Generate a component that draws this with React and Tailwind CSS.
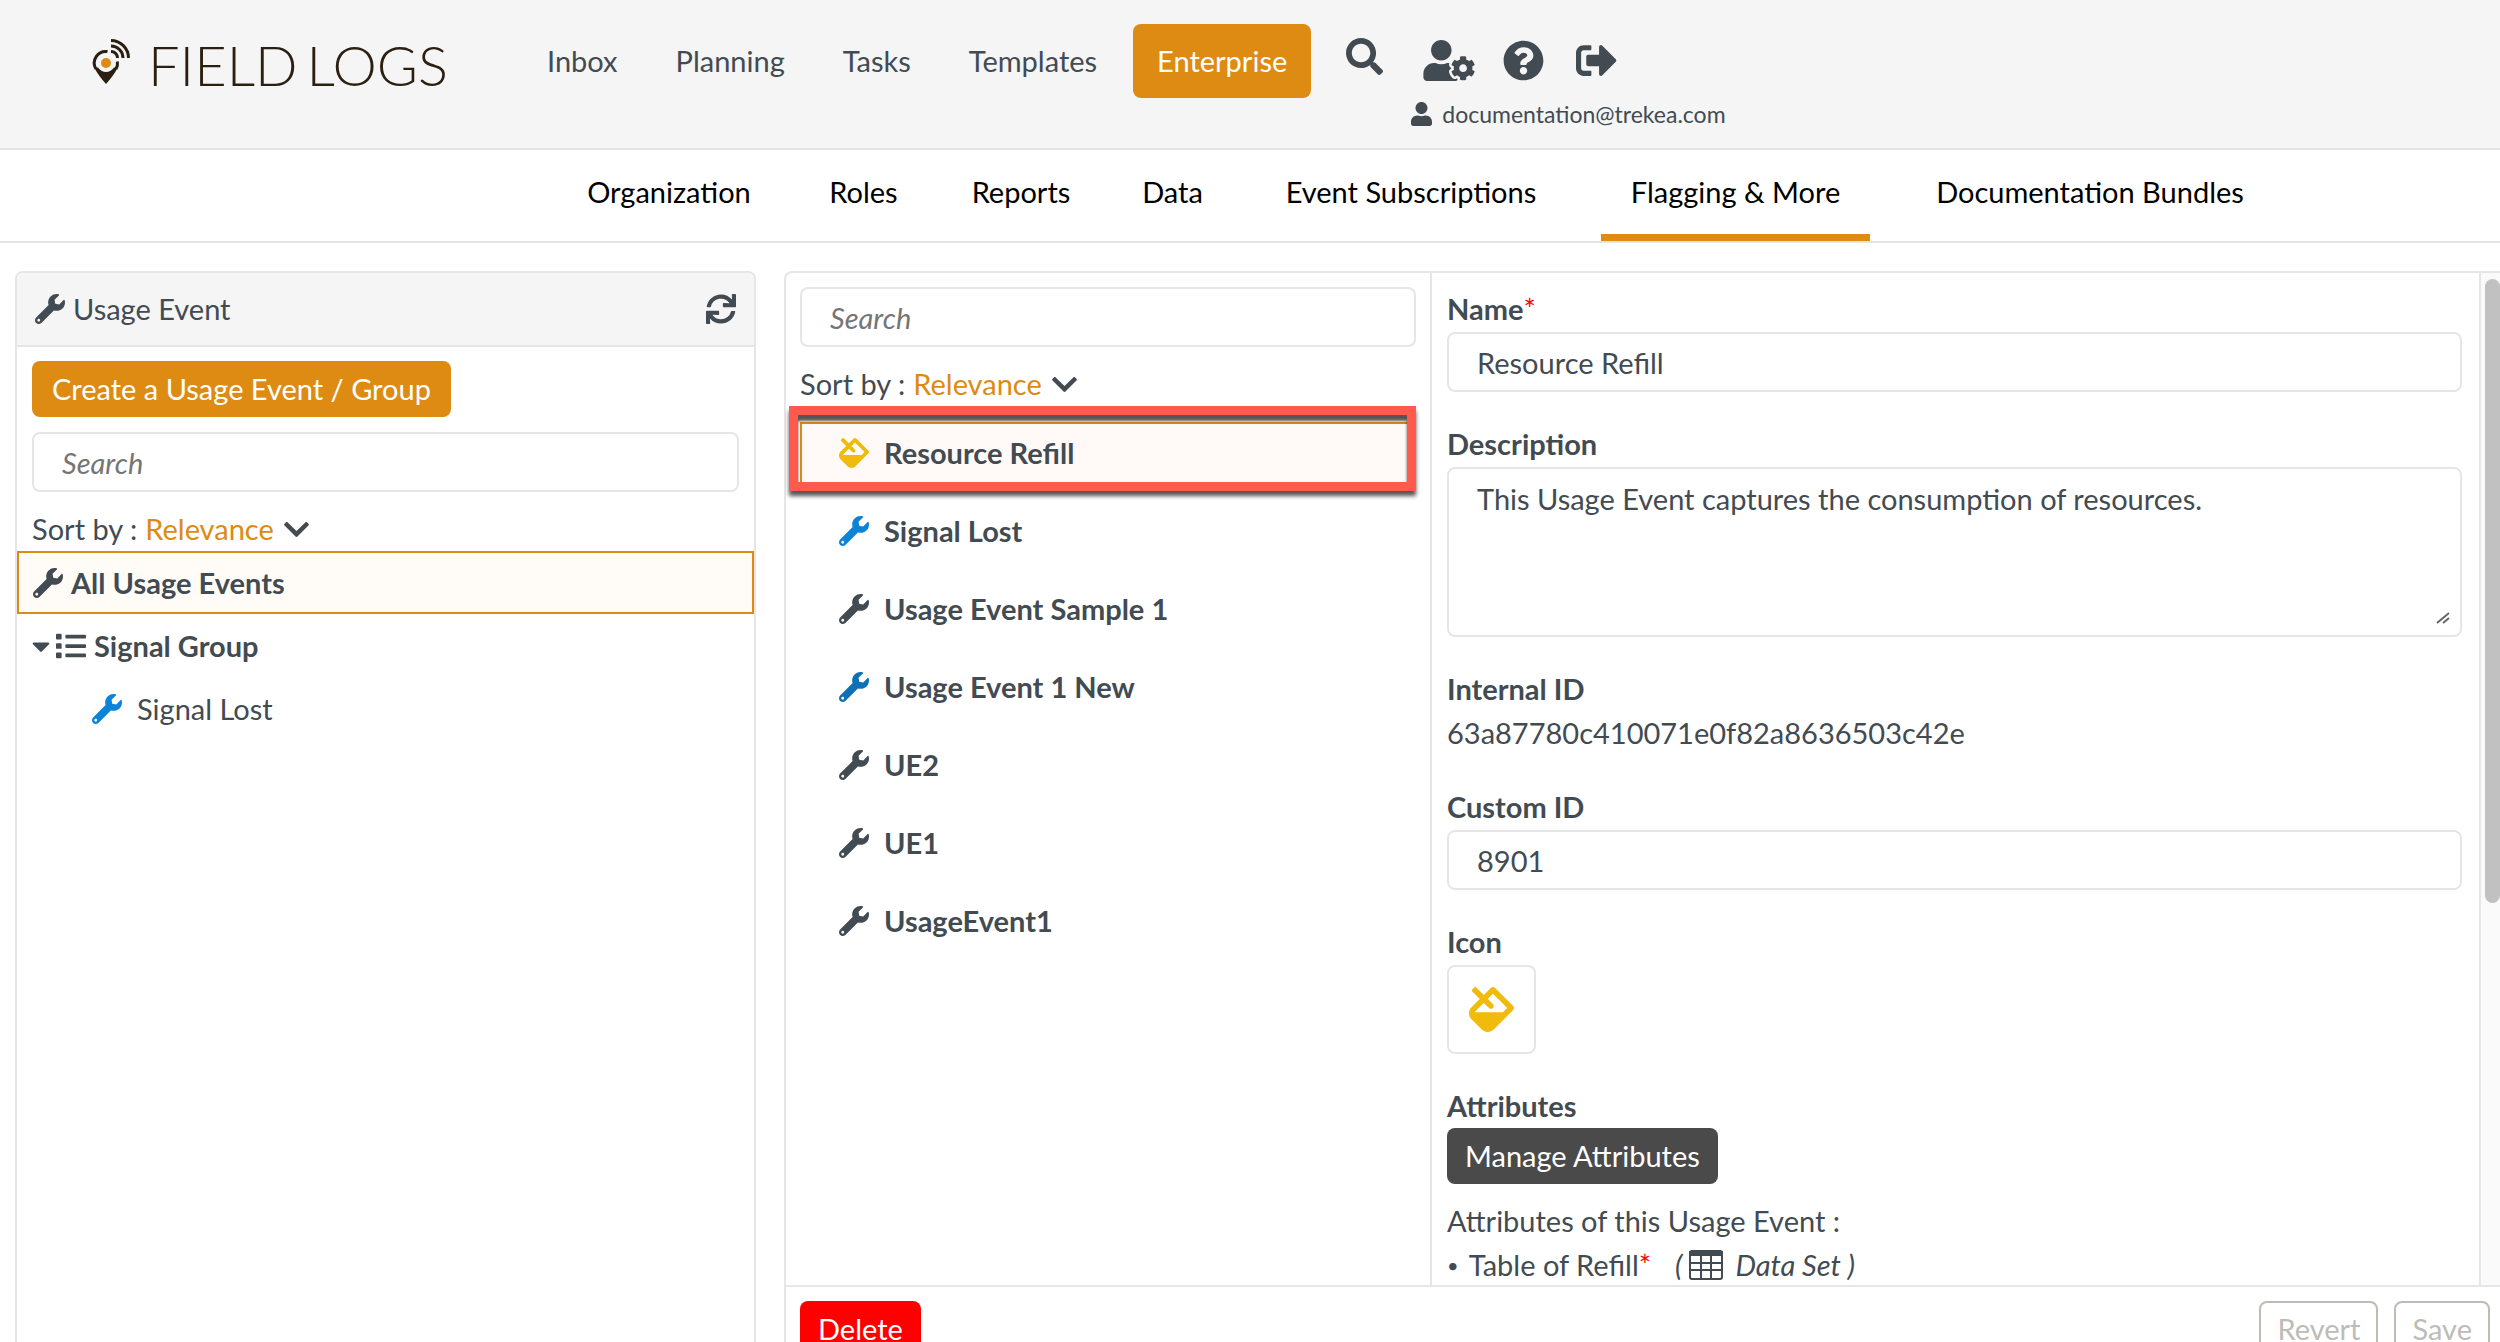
import React from "react";
import {
    FaCaretDown,
    FaChevronDown,
    FaFill,
    FaList,
    FaQuestionCircle,
    FaSearch,
    FaSignOutAlt,
    FaSync,
    FaUser,
    FaUserCog,
    FaWrench,
} from "react-icons/fa";

const mainLinks = ["Inbox", "Planning", "Tasks", "Templates"];

const tabs = [
    { label: "Organization", width: "min-w-[240px]" },
    { label: "Roles", width: "min-w-[109px]" },
    { label: "Reports", width: "min-w-[166px]" },
    { label: "Data", width: "min-w-[97px]" },
    { label: "Event Subscriptions", width: "min-w-[340px]" },
    { label: "Flagging & More", width: "min-w-[269px]", active: true },
    { label: "Documentation Bundles", width: "min-w-[400px]" },
];

const usageEvents = [
    { name: "Resource Refill", icon: FaFill, color: "text-[#f0bb0b]", selected: true },
    { name: "Signal Lost", icon: FaWrench, color: "text-[#0b84d8]" },
    { name: "Usage Event Sample 1", icon: FaWrench, color: "text-[#434b52]" },
    { name: "Usage Event 1 New", icon: FaWrench, color: "text-[#1070b5]" },
    { name: "UE2", icon: FaWrench, color: "text-[#434b52]" },
    { name: "UE1", icon: FaWrench, color: "text-[#434b52]" },
    { name: "UsageEvent1", icon: FaWrench, color: "text-[#434b52]" },
];

const Logo = () => (
    <a href="#home" aria-label="Field Logs" className="flex w-[446px] shrink-0 items-start pt-[37px] pl-[92px] text-[#2a1f10]">
        <svg viewBox="0 0 40 50" className="h-[50px] w-[40px] shrink-0" fill="none" stroke="currentColor" strokeWidth="3">
            <path d="M15.500 14.600A11.500 11.500 0 0 0 4 32" />
            <path d="M25.400 24.500A11.500 11.500 0 0 1 24 32" />
            <path d="M2.500 31Q6 38 14 47Q22 38 25.500 31L22 30.500A9.500 9.500 0 0 1 6 30.500Z" fill="currentColor" stroke="none" />
            <circle cx="14" cy="26" r="5" fill="#dd8b13" stroke="none" />
            <path d="M19 14.500A6.500 6.500 0 0 1 25.500 21M19 9A12 12 0 0 1 31 21M19 3.500A17.500 17.500 0 0 1 36.500 21" />
        </svg>
        <span className="ml-4 flex gap-[9px] text-[56px] leading-[56px] font-light">
            <span>FIELD</span>
            <span>LOGS</span>
        </span>
    </a>
);

const TableIcon = () => (
    <svg viewBox="0 0 34 30" className="h-[30px] w-[34px]" fill="none" stroke="currentColor" strokeWidth="2">
        <rect x="1" y="1" width="32" height="28" rx="2" />
        <path d="M1 2h32v3H1z" fill="currentColor" />
        <path d="M1 13h32M1 20h32M12 6v23M22 6v23" />
    </svg>
);

const SortBy = () => (
    <div className="flex h-[44px] items-center">
        <span>Sort by :</span>
        <button className="ml-2 flex items-center gap-2 text-[#dd8b13]">
            Relevance
            <FaChevronDown className="size-[29px] text-[#434b52]" />
        </button>
    </div>
);

const SearchBox = ({ label }) => (
    <input
        type="search"
        aria-label={label}
        placeholder="Search"
        className="h-[60px] w-full rounded-lg border-2 border-[#e6e6e6] px-7 placeholder:text-[#757575] placeholder:italic"
    />
);

const Field = ({ id, label, required, children }) => (
    <div className="flex flex-col items-start">
        <label htmlFor={id} className="mb-px font-bold">
            {label}
            {required && <span className="font-normal text-[#ff0000]">*</span>}
        </label>
        {children}
    </div>
);

const Header = () => (
    <header className="flex h-[150px] shrink-0 border-b-2 border-[#e3e3e3] bg-[#f5f5f5]">
        <Logo />
        <nav className="mt-[24px] ml-[79px] flex h-[74px] items-center gap-[14px]">
            {mainLinks.map((link) => (
                <a key={link} href="#main" className="px-[22px]">
                    {link}
                </a>
            ))}
            <a href="#enterprise" className="flex h-full items-center rounded-lg bg-[#dd8b13] px-6 text-white">
                Enterprise
            </a>
        </nav>
        <div className="ml-[35px] flex flex-col pt-[36px]">
            <div className="flex h-[48px] items-center">
                <button aria-label="Search" className="pb-2">
                    <FaSearch className="size-[37px]" />
                </button>
                <button aria-label="User settings" className="ml-[40px]">
                    <FaUserCog className="h-[41px] w-[52px]" />
                </button>
                <button aria-label="Help" className="ml-[28px]">
                    <FaQuestionCircle className="size-[41px]" />
                </button>
                <button aria-label="Sign out" className="ml-[32px]">
                    <FaSignOutAlt className="size-[41px]" />
                </button>
            </div>
            <div className="mt-[10px] ml-[65px] flex items-center gap-[10px] text-[23px] leading-[40px]">
                <FaUser className="h-[24px] w-[21px]" />
                documentation@trekea.com
            </div>
        </div>
    </header>
);

const Tabs = () => (
    <nav className="flex h-[93px] shrink-0 gap-5 border-b-2 border-[#e3e3e3] pl-[549px] text-black">
        {tabs.map(({ label, width, active }) => (
            <a
                key={label}
                href="#tab"
                className={`${width} flex items-center justify-center border-b-[7px] whitespace-nowrap ${active ? "border-[#dd8b13]" : "border-transparent"}`}
            >
                {label}
            </a>
        ))}
    </nav>
);

const GroupPanel = () => (
    <aside className="w-[741px] shrink-0 rounded-t-lg border-2 border-b-0 border-[#e6e6e6]">
        <div className="flex h-[74px] items-center rounded-t-lg border-b-2 border-[#e6e6e6] bg-[#f5f5f5] px-[18px]">
            <FaWrench className="size-[30px]" />
            <h2 className="ml-2">Usage Event</h2>
            <button aria-label="Refresh" className="ml-auto">
                <FaSync className="size-[30px]" />
            </button>
        </div>
        <div className="px-[15px] pt-[14px]">
            <button className="h-[56px] rounded-lg bg-[#dd8b13] px-5 text-white">Create a Usage Event / Group</button>
            <div className="my-[15px]">
                <SearchBox label="Search groups" />
            </div>
            <SortBy />
        </div>
        <ul>
            <li>
                <button className="flex h-[63px] w-full items-center gap-2 border-2 border-[#dd8b13] bg-[#fffcf8] pl-[14px] font-bold">
                    <FaWrench className="size-[30px]" />
                    All Usage Events
                </button>
            </li>
            <li className="flex h-[63px] items-center pl-[15px] font-bold">
                <button aria-label="Collapse Signal Group">
                    <FaCaretDown className="h-[30px] w-[18px]" />
                </button>
                <FaList className="ml-[6px] size-[30px]" />
                <span className="ml-2">Signal Group</span>
            </li>
            <li className="flex h-[63px] items-center gap-[15px] pl-[75px]">
                <FaWrench className="size-[30px] text-[#0b84d8]" />
                Signal Lost
            </li>
        </ul>
    </aside>
);

const EventList = () => (
    <section className="w-[646px] shrink-0 border-r-2 border-[#e6e6e6] px-[14px] pt-[14px]">
        <SearchBox label="Search usage events" />
        <div className="mt-[15px]">
            <SortBy />
        </div>
        <ul className="mt-4 flex flex-col gap-4">
            {usageEvents.map(({ name, icon: Icon, color, selected }) => (
                <li key={name} className="relative">
                    <button
                        className={`flex h-[62px] w-full items-center gap-[15px] border-2 pl-[37px] font-bold ${selected ? "border-[#dd8b13] bg-[#fffaf7]" : "border-transparent"}`}
                    >
                        <Icon className={`size-[30px] ${color}`} />
                        {name}
                    </button>
                    {selected && (
                        <div className="pointer-events-none absolute -top-[16px] right-0 -bottom-[7px] -left-[11px] border-[9px] border-[#ff5a4b] shadow-[0_5px_4px_#000a,inset_0_6px_3px_#000a]" />
                    )}
                </li>
            ))}
        </ul>
    </section>
);

const EventDetails = () => (
    <form className="flex min-w-0 flex-1 flex-col gap-[30px] overflow-hidden pt-[14px] pr-[17px] pl-[15px] leading-[44px]">
        <Field id="name" label="Name" required>
            <input id="name" defaultValue="Resource Refill" className="h-[60px] w-full rounded-lg border-2 border-[#e6e6e6] px-7" />
        </Field>
        <Field id="description" label="Description">
            <div className="relative flex w-full">
                <textarea
                    id="description"
                    defaultValue="This Usage Event captures the consumption of resources."
                    className="h-[170px] w-full resize-none rounded-lg border-2 border-[#e6e6e6] px-7 py-2"
                />
                <svg viewBox="0 0 14 14" className="absolute right-3 bottom-3 size-[14px]" stroke="#666" strokeWidth="2">
                    <path d="M1 12L13 2M7 12L13 7" />
                </svg>
            </div>
        </Field>
        <div>
            <h3 className="font-bold">Internal ID</h3>
            <p>63a87780c410071e0f82a8636503c42e</p>
        </div>
        <Field id="custom-id" label="Custom ID">
            <input id="custom-id" defaultValue="8901" className="h-[60px] w-full rounded-lg border-2 border-[#e6e6e6] px-7" />
        </Field>
        <Field id="icon" label="Icon">
            <button id="icon" type="button" className="flex size-[89px] items-center justify-center rounded-lg border-2 border-[#e6e6e6]">
                <FaFill className="size-[45px] text-[#f0bb0b]" />
            </button>
        </Field>
        <div>
            <h3 className="font-bold">Attributes</h3>
            <button type="button" className="mb-[15px] flex h-[56px] items-center rounded-lg bg-[#4a4a4a] px-[18px] text-white">
                Manage Attributes
            </button>
            <p>Attributes of this Usage Event :</p>
            <div className="flex items-center whitespace-pre">
                <span className="text-[20px]">•  </span>
                Table of Refill
                <span className="text-[#ff0000]">*</span>
                <span className="ml-6 flex items-center gap-[6px] italic">
                    (<TableIcon /> Data Set )
                </span>
            </div>
        </div>
    </form>
);

const App = () => (
    <div className="flex h-screen flex-col overflow-hidden bg-white font-[Lato,sans-serif] text-[29px] leading-[44px] text-[#434b52]">
        <Header />
        <Tabs />
        <main className="flex min-h-0 flex-1 gap-7 pt-7 pl-[15px]">
            <GroupPanel />
            <div className="flex min-w-0 flex-1 flex-col rounded-tl-lg border-t-2 border-l-2 border-[#e6e6e6]">
                <div className="flex min-h-0 flex-1">
                    <EventList />
                    <EventDetails />
                    <div className="w-[21px] shrink-0 border-l-2 border-[#e6e6e6] bg-[#fafafa] pt-[6px] pl-1">
                        <div className="h-[62%] rounded-full bg-[#c1c1c1]" />
                    </div>
                </div>
                <footer className="flex h-[57px] shrink-0 items-start gap-4 border-t-2 border-[#e6e6e6] pt-[14px] pr-[10px] pl-[14px]">
                    <button className="h-[56px] rounded-lg bg-[#ff0000] px-[18px] text-white">Delete</button>
                    <button className="ml-auto h-[56px] rounded-lg border-2 border-[#bdbcb7] px-4 text-[#bdbcb7]">Revert</button>
                    <button className="h-[56px] rounded-lg border-2 border-[#bdbcb7] px-4 text-[#bdbcb7]">Save</button>
                </footer>
            </div>
        </main>
    </div>
);

export default App;
